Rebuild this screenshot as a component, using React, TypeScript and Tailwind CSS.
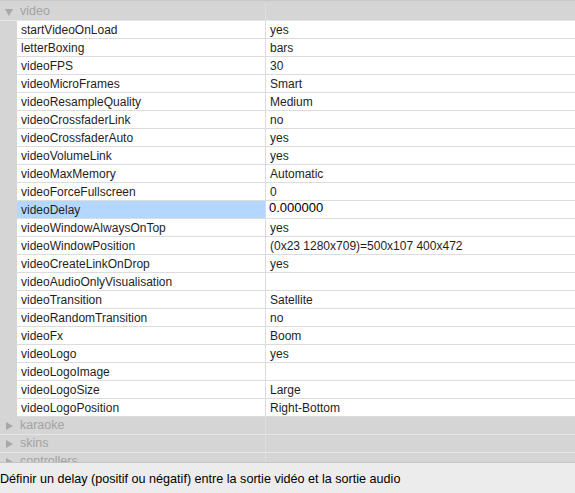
const rows: [string, string][] = [
  ["startVideoOnLoad", "yes"],
  ["letterBoxing", "bars"],
  ["videoFPS", "30"],
  ["videoMicroFrames", "Smart"],
  ["videoResampleQuality", "Medium"],
  ["videoCrossfaderLink", "no"],
  ["videoCrossfaderAuto", "yes"],
  ["videoVolumeLink", "yes"],
  ["videoMaxMemory", "Automatic"],
  ["videoForceFullscreen", "0"],
  ["videoDelay", "0.000000"],
  ["videoWindowAlwaysOnTop", "yes"],
  ["videoWindowPosition", "(0x23 1280x709)=500x107 400x472"],
  ["videoCreateLinkOnDrop", "yes"],
  ["videoAudioOnlyVisualisation", ""],
  ["videoTransition", "Satellite"],
  ["videoRandomTransition", "no"],
  ["videoFx", "Boom"],
  ["videoLogo", "yes"],
  ["videoLogoImage", ""],
  ["videoLogoSize", "Large"],
  ["videoLogoPosition", "Right-Bottom"],
]

function Triangle({ open }: { open: boolean }) {
  return (
    <svg width="8" height="8" viewBox="0 0 8 8" className="text-[#a8a8a8]">
      {open ? <path d="M0 1 L8 1 L4 8 Z" fill="currentColor" /> : <path d="M1 0 L8 4 L1 8 Z" fill="currentColor" />}
    </svg>
  )
}

function GroupRow({ name, open }: { name: string; open: boolean }) {
  return (
    <div className="flex h-[18px] shrink-0 border-b border-[#e6e6e6] bg-[#d5d5d5]">
      <div className="flex w-[17px] shrink-0 items-center justify-center pl-[1px]">
        <Triangle open={open} />
      </div>
      <div className="flex w-[249px] shrink-0 items-center border-r border-[#dedede] pl-[3px] text-[12.5px] text-[#a3a3a3]">
        {name}
      </div>
      <div className="flex-1" />
    </div>
  )
}

export default function App() {
  return (
    <div
      className="flex h-[493px] w-[575px] flex-col overflow-hidden bg-white text-[12px] text-[#1e1e1e]"
      style={{ fontFamily: '"Liberation Sans", Arial, sans-serif' }}
    >
      <div className="flex flex-1 flex-col overflow-hidden border-t border-[#c8c8c8] bg-[#d5d5d5] pt-[2px]">
        <GroupRow name="video" open />
        {rows.map(([key, value]) => {
          const selected = key === "videoDelay"
          return (
            <div key={key} className="flex h-[18px] shrink-0">
              <div className="w-[17px] shrink-0 bg-[#d5d5d5]" />
              <div
                className={
                  "flex w-[249px] shrink-0 items-center border-r border-b border-[#dcdcdc] pl-[4px] " +
                  (selected ? "bg-[#b3d7ff]" : "bg-white")
                }
              >
                {key}
              </div>
              <div className="flex flex-1 items-center border-b border-[#dcdcdc] bg-white pl-[4px]">
                {selected ? <span className="-mt-[3px] -ml-[1px] text-[13px] text-black">{value}</span> : value}
              </div>
            </div>
          )
        })}
        <GroupRow name="karaoke" open={false} />
        <GroupRow name="skins" open={false} />
        <GroupRow name="controllers" open={false} />
      </div>
      <div className="flex h-[31px] shrink-0 items-center border-t border-[#c4c4c4] bg-[#ececec] pt-[2px] text-[12.6px] text-black">
        Définir un delay (positif ou négatif) entre la sortie vidéo et la sortie audio
      </div>
    </div>
  )
}
